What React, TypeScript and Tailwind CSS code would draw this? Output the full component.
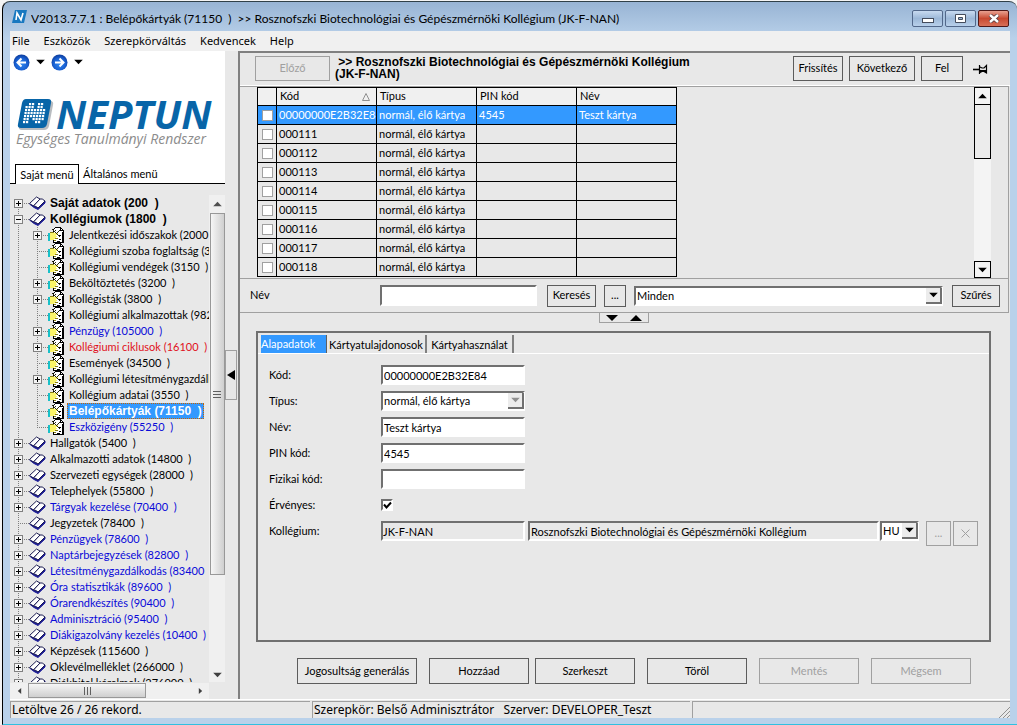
import type { ReactNode } from 'react';

type Node = { text: string; level: 0 | 1; exp?: '+' | '-'; tone?: 'blue' | 'red' | 'bold' | 'selected' };

const nodes: Node[] = [
  { text: 'Saját adatok (200\u00a0\u00a0)', level: 0, exp: '+', tone: 'bold' },
  { text: 'Kollégiumok (1800\u00a0\u00a0)', level: 0, exp: '-', tone: 'bold' },
  { text: 'Jelentkezési időszakok (2000', level: 1, exp: '+' },
  { text: 'Kollégiumi szoba foglaltság (3', level: 1 },
  { text: 'Kollégiumi vendégek (3150\u00a0\u00a0)', level: 1 },
  { text: 'Beköltöztetés (3200\u00a0\u00a0)', level: 1, exp: '+' },
  { text: 'Kollégisták (3800\u00a0\u00a0)', level: 1, exp: '+' },
  { text: 'Kollégiumi alkalmazottak (982', level: 1 },
  { text: 'Pénzügy (105000\u00a0\u00a0)', level: 1, exp: '+', tone: 'blue' },
  { text: 'Kollégiumi ciklusok (16100\u00a0\u00a0)', level: 1, exp: '+', tone: 'red' },
  { text: 'Események (34500\u00a0\u00a0)', level: 1 },
  { text: 'Kollégiumi létesítménygazdálk', level: 1, exp: '+' },
  { text: 'Kollégium adatai (3550\u00a0\u00a0)', level: 1 },
  { text: 'Belépőkártyák (71150\u00a0\u00a0)', level: 1, tone: 'selected' },
  { text: 'Eszközigény (55250\u00a0\u00a0)', level: 1, tone: 'blue' },
  { text: 'Hallgatók (5400\u00a0\u00a0)', level: 0, exp: '+' },
  { text: 'Alkalmazotti adatok (14800\u00a0\u00a0)', level: 0, exp: '+' },
  { text: 'Szervezeti egységek (28000\u00a0\u00a0)', level: 0, exp: '+' },
  { text: 'Telephelyek (55800\u00a0\u00a0)', level: 0, exp: '+' },
  { text: 'Tárgyak kezelése (70400\u00a0\u00a0)', level: 0, exp: '+', tone: 'blue' },
  { text: 'Jegyzetek (78400\u00a0\u00a0)', level: 0 },
  { text: 'Pénzügyek (78600\u00a0\u00a0)', level: 0, exp: '+', tone: 'blue' },
  { text: 'Naptárbejegyzések (82800\u00a0\u00a0)', level: 0, exp: '+', tone: 'blue' },
  { text: 'Létesítménygazdálkodás (83400', level: 0, exp: '+', tone: 'blue' },
  { text: 'Óra statisztikák (89600\u00a0\u00a0)', level: 0, exp: '+', tone: 'blue' },
  { text: 'Órarendkészítés (90400\u00a0\u00a0)', level: 0, exp: '+', tone: 'blue' },
  { text: 'Adminisztráció (95400\u00a0\u00a0)', level: 0, exp: '+', tone: 'blue' },
  { text: 'Diákigazolvány kezelés (10400\u00a0\u00a0)', level: 0, exp: '+', tone: 'blue' },
  { text: 'Képzések (115600\u00a0\u00a0)', level: 0, exp: '+' },
  { text: 'Oklevélmelléklet (266000\u00a0\u00a0)', level: 0, exp: '+' },
  { text: 'Diákhitel kérelmek (276000\u00a0\u00a0)', level: 0, exp: '+' },
];

const tones = {
  blue: 'text-[#0a0ad8]',
  red: 'text-[#e01020]',
  bold: 'font-[Liberation_Sans,Arial,sans-serif] text-xs font-bold',
  selected:
    'font-[Liberation_Sans,Arial,sans-serif] text-xs font-bold bg-[#3399ff] text-white outline-1 -outline-offset-1 outline-dotted outline-[#c86400]',
};

const cards = [
  ['00000000E2B32E84', '4545', 'Teszt kártya'],
  ['000111', '', ''],
  ['000112', '', ''],
  ['000113', '', ''],
  ['000114', '', ''],
  ['000115', '', ''],
  ['000116', '', ''],
  ['000117', '', ''],
  ['000118', '', ''],
];

const logoDots = [' ## ## ', '### ## ', '#######', '#######', '#######', '## ####', '##  ## '];

const sunken = 'border-2 border-t-[#707070] border-l-[#707070] border-r-white border-b-white';
const th = 'border-r border-b border-black pr-0.5 pl-[3px] py-0 font-normal';
const td = 'overflow-hidden border-r border-b border-black pr-0 pl-0.5 py-0 whitespace-nowrap';

function Tri({ dir, className = 'text-black' }: { dir: 'up' | 'down' | 'left' | 'right'; className?: string }) {
  const d = {
    up: 'M0 6 L5 1 L10 6 Z',
    down: 'M0 1 L5 6 L10 1 Z',
    left: 'M7 0 L7 7 L3 3.5 Z',
    right: 'M3 0 L3 7 L7 3.5 Z',
  }[dir];
  return (
    <svg className={className} width="9" height="6" viewBox="0 0 10 7" fill="currentColor">
      <path d={d} />
    </svg>
  );
}

function Branch({ level, exp, last, first }: { level: number; exp?: string; last?: boolean; first?: boolean }) {
  const x = level ? 27 : 8;
  const w = level ? 38 : 19;
  return (
    <svg className="shrink-0" width={w} height="16" fill="none" stroke="#808080" shapeRendering="crispEdges">
      <path d={`M8.5 ${first ? 8 : 0}V16`} strokeDasharray="1 1" />
      {level === 1 && <path d={`M27.5 0V${last ? 8 : 16}`} strokeDasharray="1 1" />}
      <path d={`M${x} 8.5H${w}`} strokeDasharray="1 1" />
      {exp && (
        <>
          <rect x={x - 3.5} y="4.5" width="8" height="8" fill="#f4f4f4" />
          <path d={`M${x - 2} 8.5h5`} stroke="#000" />
          {exp === '+' && <path d={`M${x + 0.5} 6v5`} stroke="#000" />}
        </>
      )}
    </svg>
  );
}

function BookIcon() {
  return (
    <svg className="shrink-0" width="17" height="16" viewBox="0 0 17 16" strokeLinejoin="round">
      <path d="M0.5 9 L5 12.5 L9 14.5 L16 8 V6" fill="#1c1c98" stroke="#1c1c98" />
      <path d="M0.5 8.5 L7.5 2 L11 4 L4.5 11 Z" fill="#fff" stroke="#1a1a50" />
      <path d="M4.5 11 L11 4 Q13 3 16 6 L9 13 Q7 11 4.5 11 Z" fill="#fff" stroke="#1a1a50" />
    </svg>
  );
}

function FormIcon() {
  return (
    <svg className="shrink-0" width="16" height="16" viewBox="0 0 16 16" shapeRendering="crispEdges">
      <path d="M7.5 0.5H12.5L15.5 3.5V15.5H5.5V2.5Z" fill="#fff" stroke="#000" />
      <path d="M12.5 0V3.5H16M14.5 5V15M11 8.5H13M9 14.5H12M11 12.5H13" stroke="#000" fill="none" />
      <path d="M0 6H2V14H0Z" fill="#18c0c8" />
      <path d="M2 5H5L7 6H10V8H8L9 10H8V12H6V13H2Z" fill="#fbf468" />
      <path d="M2 5H6M7 11H10M6 13H8" stroke="#8a8010" fill="none" />
      <path d="M4 2L12 10M9 6L12 3M6 5L8 3" stroke="#2a2a10" fill="none" />
    </svg>
  );
}

function NavArrow({ flip }: { flip?: boolean }) {
  return (
    <svg className={flip ? '-scale-x-100' : ''} width="17" height="17" viewBox="0 0 17 17">
      <defs>
        <radialGradient id={flip ? 'nf' : 'nb'} cx="0.5" cy="0.6" r="0.6">
          <stop offset="0" stopColor="#2f86ee" />
          <stop offset="0.6" stopColor="#1a62d4" />
          <stop offset="1" stopColor="#0c3c9c" />
        </radialGradient>
      </defs>
      <circle cx="8.5" cy="8.5" r="8" fill={flip ? 'url(#nf)' : 'url(#nb)'} />
      <path d="M13 8.5H5M8.5 4.5L4.5 8.5L8.5 12.5" stroke="#fff" strokeWidth="2" fill="none" />
    </svg>
  );
}

function LogoMark() {
  return (
    <svg className="shrink-0" width="37" height="31" viewBox="0 0 37 31">
      <path d="M10 2H33Q37 2 36 6L32 27Q31 31 27 31H5Q1 31 2 27L6 6Q7 2 10 2Z" fill="#b8bcc0" />
      <path d="M9 0H31Q35 0 34 4L30 25Q29 29 25 29H4Q0 29 1 25L5 4Q6 0 9 0Z" fill="#0865a8" />
      <g fill="#fff">
        {logoDots.map((row, r) =>
          [...row].map((d, c) => d === '#' && <rect key={`${r}-${c}`} x={9 + c * 3 - r * 0.5} y={4 + r * 3} width="2.2" height="2.2" />),
        )}
      </g>
    </svg>
  );
}

function Btn({ children, className = '', disabled }: { children: ReactNode; className?: string; disabled?: boolean }) {
  return (
    <button
      type="button"
      disabled={disabled}
      className={`shrink-0 border border-[#5c5c5c] text-center disabled:border-[#a0a0a0] disabled:text-[#a0a0a0] ${className}`}
    >
      {children}
    </button>
  );
}

function Select({ value, label, id, className, disabled }: { value: string; label?: string; id?: string; className: string; disabled?: boolean }) {
  return (
    <div className={`relative ${className}`}>
      <select
        id={id}
        aria-label={label}
        disabled={disabled}
        className={`block h-5 w-full appearance-none bg-white pl-px text-black opacity-100 ${sunken}`}
      >
        <option>{value}</option>
      </select>
      <span className="pointer-events-none absolute top-0.5 right-px flex h-4 w-4 items-center justify-center border-r-2 border-b-2 border-[#707070] bg-[#ececec]">
        <Tri dir="down" className={disabled ? 'text-[#909090]' : 'text-black'} />
      </span>
    </div>
  );
}

function Row({ id, label, children }: { id: string; label: string; children: ReactNode }) {
  return (
    <div className="flex h-[26px] items-start">
      <label htmlFor={id} className="w-28 shrink-0 leading-5">{label}</label>
      {children}
    </div>
  );
}

function Field({ id, label, value }: { id: string; label: string; value: string }) {
  return (
    <Row id={id} label={label}>
      <input id={id} defaultValue={value} className={`h-5 w-36 bg-white pl-px ${sunken}`} />
    </Row>
  );
}

function TitleBar() {
  return (
    <header className="flex h-[29px] shrink-0 items-center pl-0.5">
      <svg width="15" height="13" viewBox="0 0 15 13">
        <path d="M3 0H15L12 13H0Z" fill="#1878c0" />
        <path d="M4 10L5 3L9 10L11 3" stroke="#fff" strokeWidth="1.6" fill="none" />
      </svg>
      <h1 className="ml-1 flex-1 truncate pt-1 text-xs whitespace-pre">
        {'V2013.7.7.1 : Belépőkártyák (71150  )  >> Rosznofszki Biotechnológiai és Gépészmérnöki Kollégium (JK-F-NAN)'}
      </h1>
      <div className="mt-1 mr-px flex gap-0.5">
        <button aria-label="Kis méret" className="flex h-[17px] w-[31px] items-center justify-center rounded-xs border border-[#52688a] bg-linear-to-b from-[#c8daf0] via-[#9cb8d8] to-[#b8d0ea]">
          <svg width="12" height="9"><rect x="0.5" y="4.5" width="11" height="4" fill="#fff" stroke="#444c5c" /></svg>
        </button>
        <button aria-label="Teljes méret" className="flex h-[17px] w-[31px] items-center justify-center rounded-xs border border-[#52688a] bg-linear-to-b from-[#c8daf0] via-[#9cb8d8] to-[#b8d0ea]">
          <svg width="11" height="9"><path d="M0.5 0.5H10.5V8.5H0.5ZM3.5 3.5V5.5H7.5V3.5Z" fill="#fff" fillRule="evenodd" stroke="#444c5c" /></svg>
        </button>
        <button aria-label="Bezárás" className="flex h-[17px] w-[31px] items-center justify-center rounded-xs border border-[#501818] bg-linear-to-b from-[#e8a090] via-[#c84830] to-[#d87058]">
          <svg width="12" height="9"><path d="M2 1L10 8M10 1L2 8" stroke="#50383c" strokeWidth="4" /><path d="M2 1L10 8M10 1L2 8" stroke="#fff" strokeWidth="2.4" /></svg>
        </button>
      </div>
    </header>
  );
}

function Sidebar() {
  return (
    <aside className="flex w-[215px] shrink-0 flex-col">
      <div className="bg-white pt-0.5">
        <div className="flex h-[18px] items-center gap-1.5 pl-[3px]">
          <button aria-label="Vissza"><NavArrow /></button>
          <Tri dir="down" />
          <button aria-label="Előre"><NavArrow flip /></button>
          <Tri dir="down" />
        </div>
        <div className="mt-7 flex h-[30px] items-center pl-[7px]">
          <LogoMark />
          <span className="ml-0.5 font-[Open_Sans,sans-serif] text-[40px] leading-[30px] font-bold text-[#0865a8] italic">NEPTUN</span>
        </div>
        <p className="pl-1.5 font-[Open_Sans,sans-serif] text-sm leading-5 whitespace-nowrap text-[#8c8c8c] italic">
          Egységes Tanulmányi Rendszer
        </p>
        <div role="tablist" className="mt-[15px] flex h-5">
          <span className="w-[5px] border-b border-black" />
          <button role="tab" aria-selected="true" className="w-16 border border-b-0 border-black pt-0.5 whitespace-nowrap">Saját menü</button>
          <button role="tab" aria-selected="false" className="flex-1 border-b border-black pt-0.5 pl-1 text-left">Általános menü</button>
        </div>
      </div>

      <div className="mt-[11px] flex min-h-0 flex-1">
        <ul className="min-w-0 flex-1 overflow-hidden">
          {nodes.map((n, i) => (
            <li key={n.text} className="flex h-4 items-center whitespace-nowrap">
              <Branch level={n.level} exp={n.exp} first={i === 0} last={n.level === 1 && nodes[i + 1]?.level === 0} />
              {n.level ? <FormIcon /> : <BookIcon />}
              <button className={`h-4 px-0.5 leading-4 ${n.level ? 'ml-[3px]' : 'ml-0.5'} ${n.tone ? tones[n.tone] : ''}`}>{n.text}</button>
            </li>
          ))}
        </ul>
        <div className="flex w-4 flex-col items-center bg-[#f0f0f0]">
          <div className="flex h-[18px] items-center"><Tri dir="up" className="text-[#505050]" /></div>
          <div className="flex w-[15px] flex-[364] flex-col items-center justify-center gap-0.5 border border-[#989898] bg-linear-to-r from-[#f6f6f6] to-[#cfcfcf]">
            <span className="h-px w-2 bg-[#606060]" />
            <span className="h-px w-2 bg-[#606060]" />
            <span className="h-px w-2 bg-[#606060]" />
          </div>
          <div className="flex flex-[104] items-end pb-1"><Tri dir="down" className="text-[#404040]" /></div>
        </div>
      </div>
      <div className="flex h-[17px] shrink-0 items-center">
        <div className="flex h-4 flex-1 items-center bg-[#f0f0f0]">
          <div className="flex w-[18px] justify-center"><Tri dir="left" className="text-[#404040]" /></div>
          <div className="flex h-[15px] w-[118px] items-center justify-center gap-0.5 border border-[#989898] bg-linear-to-b from-[#f6f6f6] to-[#cfcfcf]">
            <span className="h-2 w-px bg-[#606060]" />
            <span className="h-2 w-px bg-[#606060]" />
            <span className="h-2 w-px bg-[#606060]" />
          </div>
          <div className="ml-auto pr-1"><Tri dir="right" className="text-[#404040]" /></div>
        </div>
        <span className="w-4" />
      </div>
    </aside>
  );
}

function CardList() {
  return (
    <div className="flex h-[192px] shrink-0 items-start justify-between overflow-hidden border-b border-[#a0a0a0] px-[17px]">
      <table className="w-[420px] table-fixed border-separate border-spacing-0 border-t border-l border-black text-left">
        <thead>
          <tr className="h-[18px] bg-[#f0f0f0]">
            <th className="w-[19px] border-r border-b border-black p-0" aria-label="Kijelölés" />
            <th className={`w-[100px] ${th}`}>
              <span className="flex items-center justify-between pr-1">
                Kód
                <svg width="8" height="8" fill="none" stroke="#909090"><path d="M4 0.5L7.5 7.5H0.5Z" /></svg>
              </span>
            </th>
            <th className={`w-[100px] ${th}`}>Típus</th>
            <th className={`w-[100px] ${th}`}>PIN kód</th>
            <th className={`w-[100px] ${th}`}>Név</th>
          </tr>
        </thead>
        <tbody>
          {cards.map(([code, pin, name], i) => (
            <tr key={code} className={`h-[19px] ${i === 0 ? 'bg-[#3399ff] text-white' : ''}`}>
              <td className="border-r border-b border-black p-0">
                <input type="checkbox" aria-label={code} className="mx-auto block size-[11px] appearance-none border border-[#a0a0a0] bg-white" />
              </td>
              <td className={td}>{code}</td>
              <td className={td}>normál, élő kártya</td>
              <td className={td}>{pin}</td>
              <td className={td}>{name}</td>
            </tr>
          ))}
        </tbody>
      </table>
      <div className="flex h-full w-[17px] flex-col bg-[#f4f4f4]">
        <button aria-label="Fel" className="flex h-[18px] items-center justify-center border border-black"><Tri dir="up" /></button>
        <div className="h-[54px] border border-t-0 border-black bg-[#ececec]" />
        <button aria-label="Le" className="mt-auto flex h-[17px] items-center justify-center border border-black"><Tri dir="down" /></button>
      </div>
    </div>
  );
}

function Details() {
  return (
    <section className="mr-[19px] ml-4 mt-2 flex min-h-0 flex-1 flex-col border-2 border-[#707070]">
      <div role="tablist" className="flex h-[21px] items-end border-b border-white pl-[3px]">
        <button role="tab" aria-selected="true" className="h-[18px] w-[66px] border-r border-[#606060] bg-[#3399ff] text-left leading-4 text-white">
          Alapadatok
        </button>
        <button role="tab" aria-selected="false" className="h-[18px] w-[100px] border-r-2 border-[#808080] pt-0.5">Kártyatulajdonosok</button>
        <button role="tab" aria-selected="false" className="h-[18px] w-[87px] border-r-2 border-[#808080] pt-0.5">Kártyahasználat</button>
      </div>
      <div className="pt-[11px] pl-[11px]">
        <Field id="kod" label="Kód:" value="00000000E2B32E84" />
        <Row id="tipus" label="Típus:">
          <Select id="tipus" value="normál, élő kártya" className="w-36" disabled />
        </Row>
        <Field id="nev" label="Név:" value="Teszt kártya" />
        <Field id="pin" label="PIN kód:" value="4545" />
        <Field id="fizikai" label="Fizikai kód:" value="" />
        <Row id="ervenyes" label="Érvényes:">
          <span className="relative mt-1">
            <input id="ervenyes" type="checkbox" defaultChecked className={`block size-3 appearance-none bg-white ${sunken}`} />
            <svg className="pointer-events-none absolute top-0.5 left-0.5" width="9" height="9" fill="none" stroke="#000" strokeWidth="2">
              <path d="M1 3.5L3.5 6.5L8 1.5" />
            </svg>
          </span>
        </Row>
        <Row id="kollegium" label="Kollégium:">
          <input id="kollegium" readOnly defaultValue="JK-F-NAN" className={`h-5 w-36 shrink-0 ${sunken}`} />
          <input
            aria-label="Kollégium neve"
            readOnly
            defaultValue="Rosznofszki Biotechnológiai és Gépészmérnöki Kollégium"
            className={`mr-px ml-[3px] h-5 min-w-0 flex-1 pl-px ${sunken}`}
          />
          <Select label="Nyelv" value="HU" className="w-[39px]" />
          <Btn className="mr-0.5 ml-[7px] h-[25px] w-[25px]" disabled>...</Btn>
          <Btn className="mr-[11px] h-[25px] w-[25px]" disabled>
            <svg className="mx-auto" width="9" height="9" stroke="currentColor"><path d="M0.5 0.5L8.5 8.5M8.5 0.5L0.5 8.5" /></svg>
          </Btn>
        </Row>
      </div>
    </section>
  );
}

function Main() {
  return (
    <main className="flex min-w-0 flex-1 flex-col border-t-2 border-l-2 border-[#808080]">
      <div className="flex h-[33px] shrink-0 items-start border-b border-white pt-[3px] pl-[15px]">
        <Btn className="h-[25px] w-[75px]" disabled>Előző</Btn>
        <h2 className="ml-[5px] flex-1 font-[Liberation_Sans,Arial,sans-serif] text-xs leading-3 font-bold">
          &nbsp;&gt;&gt; Rosznofszki Biotechnológiai és Gépészmérnöki Kollégium
          <br />
          (JK-F-NAN)
        </h2>
        <Btn className="h-[25px] w-[50px]">Frissítés</Btn>
        <Btn className="ml-1.5 h-[25px] w-[66px]">Következő</Btn>
        <Btn className="ml-1.5 h-[25px] w-[42px]">Fel</Btn>
        <button aria-label="Rögzítés" className="mt-2 mr-[22px] ml-2.5">
          <svg width="15" height="11" viewBox="0 0 15 11" fill="none" stroke="#000">
            <path d="M0 5.5H6" strokeWidth="1.6" />
            <path d="M6.5 1V10M7 3L9 4H11L13.5 1.5V9L11 7.5H9L7 8.5" strokeWidth="1.2" />
            <path d="M7 7H13" strokeWidth="2" />
          </svg>
        </button>
      </div>

      <div className="mr-px flex shrink-0 flex-col border-t border-r border-b border-[#a0a0a0]">
        <CardList />
        <div className="flex h-[33px] items-center pl-2.5">
          <label htmlFor="kereses" className="w-[130px]">Név</label>
          <input id="kereses" className={`h-[21px] w-[157px] bg-white ${sunken}`} />
          <Btn className="ml-2.5 h-[22px] w-[49px]">Keresés</Btn>
          <Btn className="ml-2 h-[22px] w-[22px]">...</Btn>
          <Select label="Szűrő" value="Minden" className="ml-2 flex-1" />
          <Btn className="mr-2 ml-[9px] h-[22px] w-[48px]">Szűrés</Btn>
        </div>
      </div>

      <div className="flex h-[10px] shrink-0 justify-center pr-0.5">
        <div className="flex w-[50px] items-center justify-around border border-t-0 border-[#a0a0a0]">
          <button aria-label="Lista lenyitása">
            <svg width="12" height="6"><path d="M0 0H12L6 6Z" /></svg>
          </button>
          <button aria-label="Lista bezárása">
            <svg width="12" height="6"><path d="M0 6H12L6 0Z" /></svg>
          </button>
        </div>
      </div>

      <Details />

      <div className="flex h-[57px] shrink-0 items-start pt-4 pl-[57px]">
        <Btn className="h-[26px] w-[120px]">Jogosultság generálás</Btn>
        <Btn className="ml-3 h-[26px] w-[100px]">Hozzáad</Btn>
        <Btn className="ml-1.5 h-[26px] w-[100px]">Szerkeszt</Btn>
        <Btn className="ml-3 h-[26px] w-[100px]">Töröl</Btn>
        <Btn className="ml-3 h-[26px] w-[100px]" disabled>Mentés</Btn>
        <Btn className="ml-3 h-[26px] w-[100px]" disabled>Mégsem</Btn>
      </div>
    </main>
  );
}

export default function App() {
  return (
    <div className="h-screen bg-[#f4f4f4] pt-px pl-0.5 font-[Lato,Arial,sans-serif] text-[11px] text-black">
      <div className="flex h-full flex-col rounded-t-lg border-t border-b border-l border-t-[#304048] border-b-[#30c0e0] border-l-black bg-linear-to-b from-[#98b4d4] via-[#b9d1ea] via-5% to-[#b9d1ea] pr-[7px] pb-1.5 pl-[7px]">
        <TitleBar />
        <nav className="flex h-5 shrink-0 items-center gap-3.5 bg-[#f0f0f0] pl-0.5 font-[Noto_Sans,sans-serif] text-[11px]">
          {['File', 'Eszközök', 'Szerepkörváltás', 'Kedvencek', 'Help'].map((m) => (
            <button key={m}>{m}</button>
          ))}
        </nav>
        <div className="flex min-h-0 flex-1 bg-[#e8e8e8]">
          <Sidebar />
          <div className="flex w-[13px] shrink-0 items-center justify-start">
            <button aria-label="Menü elrejtése" className="flex h-[50px] w-3 items-center justify-center border border-[#a0a0a0]">
              <svg width="8" height="10"><path d="M8 0V10L0 5Z" /></svg>
            </button>
          </div>
          <Main />
        </div>
        <footer className="flex h-[19px] shrink-0 gap-0.5 border-t border-white bg-[#e8e8e8] pt-px font-[Noto_Sans,sans-serif] text-xs leading-4">
          <div className="w-[300px] border-t border-l border-[#a0a0a0] pl-px">Letöltve 26 / 26 rekord.</div>
          <div className="w-[378px] border-t border-l border-[#a0a0a0] pl-px whitespace-pre">{'Szerepkör: Belső Adminisztrátor   Szerver: DEVELOPER_Teszt'}</div>
          <div className="flex flex-1 items-end justify-end border-t border-l border-[#a0a0a0]">
            <svg width="12" height="12" stroke="#909090"><path d="M1 12L12 1M5 12L12 5M9 12L12 9" /></svg>
          </div>
        </footer>
      </div>
    </div>
  );
}
